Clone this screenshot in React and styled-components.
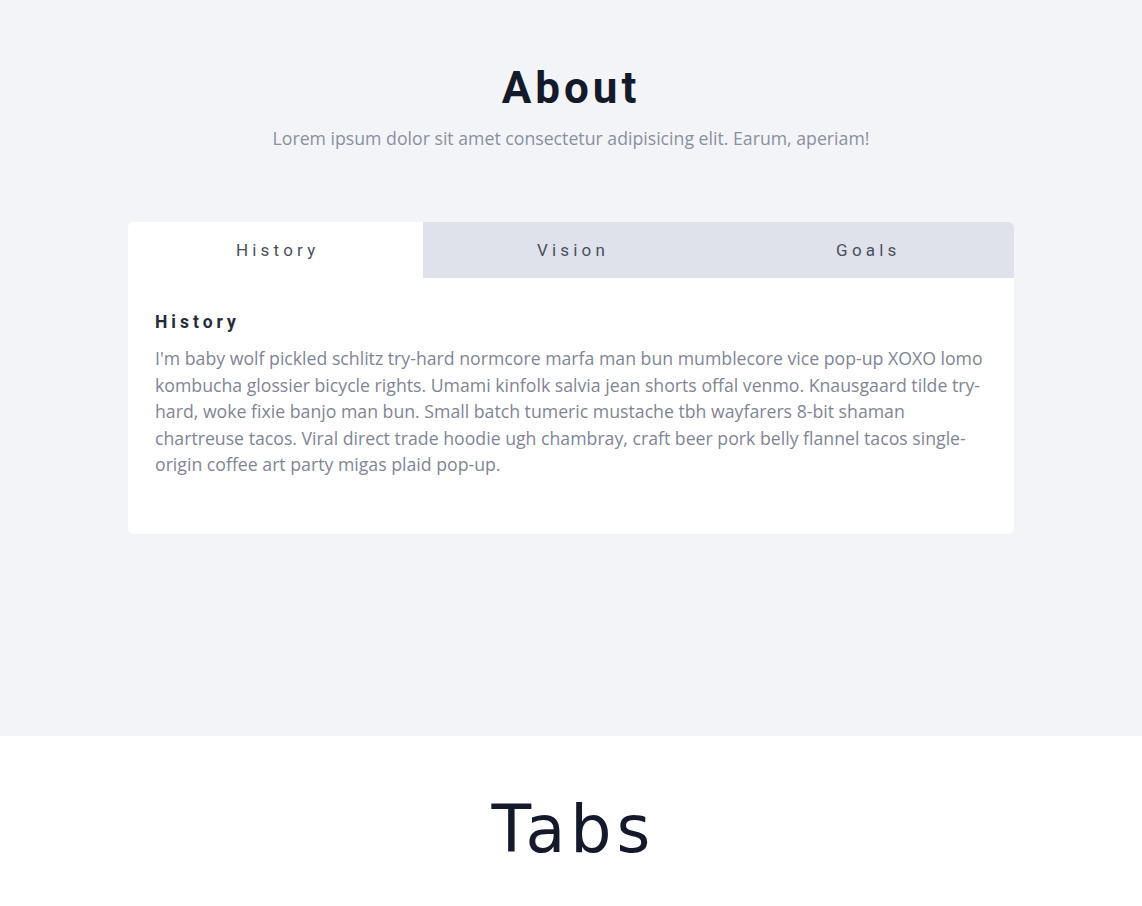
import React, { useState } from 'react';
import styled, { createGlobalStyle } from 'styled-components';

const GlobalStyle = createGlobalStyle`
  body {
    margin: 0;
    background: #fff;
    font-family: "Open Sans", sans-serif;
  }
`;

const Preview = styled.section`
  background: #f3f4f8;
  height: 736px;
  padding-top: 62px;
  box-sizing: border-box;
  display: flex;
  flex-direction: column;
  align-items: center;
`;

const Title = styled.h1`
  margin: 0;
  font-family: Roboto, sans-serif;
  font-weight: 700;
  font-size: 44px;
  line-height: 52px;
  letter-spacing: 4px;
  color: #151a2b;
`;

const Subtitle = styled.p`
  margin: 12px 0 0;
  font-size: 17.7px;
  line-height: 24px;
  color: #8a90a0;
`;

const Card = styled.div`
  margin-top: 72px;
  width: 886px;
  background: #fff;
  border-radius: 6px;
  overflow: hidden;
`;

const TabRow = styled.div`
  display: grid;
  grid-template-columns: repeat(3, 1fr);
  height: 56px;
`;

const Tab = styled.button`
  border: 0;
  margin: 0;
  padding: 0 0 0 4px;
  font-family: Roboto, sans-serif;
  font-size: 17px;
  letter-spacing: 4.2px;
  color: #4a4f5c;
  cursor: pointer;
  background: ${(p) => (p.$active ? '#fff' : '#dfe2ea')};
`;

const Panel = styled.div`
  padding: 34px 27px 56px;
`;

const PanelTitle = styled.h3`
  margin: 0;
  font-family: Roboto, sans-serif;
  font-weight: 700;
  font-size: 17.5px;
  line-height: 20px;
  letter-spacing: 4px;
  color: #262b38;
`;

const PanelText = styled.p`
  margin: 13px 0 0;
  font-size: 17.7px;
  line-height: 26.6px;
  color: #7f8596;
`;

const Caption = styled.h2`
  margin: 0;
  height: 186px;
  display: flex;
  align-items: center;
  justify-content: center;
  padding-left: 5px;
  font-family: "DejaVu Sans", sans-serif;
  font-weight: 400;
  font-size: 65px;
  letter-spacing: 5px;
  color: #141a2c;
`;

const tabs = [
  {
    name: 'History',
    text: "I'm baby wolf pickled schlitz try-hard normcore marfa man bun mumblecore vice pop-up XOXO lomo kombucha glossier bicycle rights. Umami kinfolk salvia jean shorts offal venmo. Knausgaard tilde try-hard, woke fixie banjo man bun. Small batch tumeric mustache tbh wayfarers 8-bit shaman chartreuse tacos. Viral direct trade hoodie ugh chambray, craft beer pork belly flannel tacos single-origin coffee art party migas plaid pop-up.",
  },
  {
    name: 'Vision',
    text: 'Cold-pressed freegan tofu, pickled selvage vinyl letterpress. Hammock four dollar toast gastropub normcore, actually tattooed bicycle rights umami.',
  },
  {
    name: 'Goals',
    text: 'Chambray banh mi leggings, kale chips fingerstache before they sold out biodiesel. Retro tousled poutine, vexillologist pitchfork helvetica.',
  },
];

export default function App() {
  const [active, setActive] = useState(0);
  const current = tabs[active];
  return (
    <>
      <GlobalStyle />
      <Preview>
        <Title>About</Title>
        <Subtitle>Lorem ipsum dolor sit amet consectetur adipisicing elit. Earum, aperiam!</Subtitle>
        <Card>
          <TabRow>
            {tabs.map((t, i) => (
              <Tab key={t.name} $active={i === active} onClick={() => setActive(i)}>
                {t.name}
              </Tab>
            ))}
          </TabRow>
          <Panel>
            <PanelTitle>{current.name}</PanelTitle>
            <PanelText>{current.text}</PanelText>
          </Panel>
        </Card>
      </Preview>
      <Caption>Tabs</Caption>
    </>
  );
}
